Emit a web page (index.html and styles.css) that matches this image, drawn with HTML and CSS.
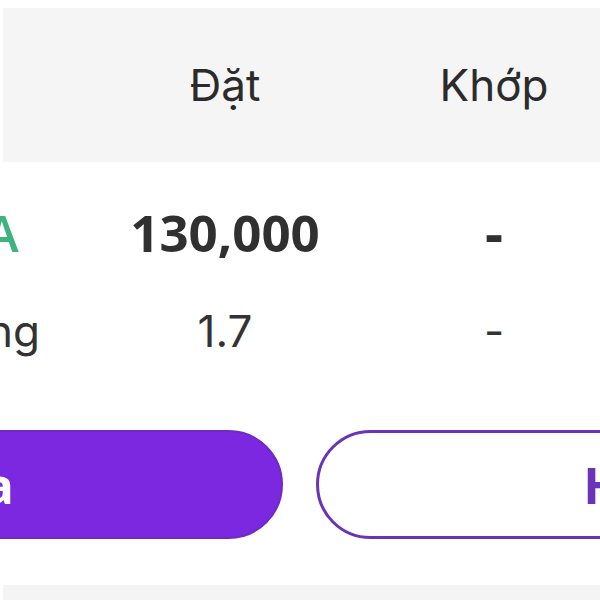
FILE: index.html
```html
<!DOCTYPE html>
<html lang="vi">
<head>
<meta charset="utf-8">
<link rel="stylesheet" href="styles.css">
</head>
<body>
<div class="screen">
  <div class="head">
    <div class="cell c1"></div>
    <div class="cell c2">Đặt</div>
    <div class="cell c3">Khớp</div>
  </div>
  <div class="row row-main">
    <div class="cell c1"><span class="side buy">A</span></div>
    <div class="cell c2 big">130,000</div>
    <div class="cell c3 big">-</div>
  </div>
  <div class="row row-sub">
    <div class="cell c1"><span class="side label">ng</span></div>
    <div class="cell c2">1.7</div>
    <div class="cell c3">-</div>
  </div>
  <div class="actions">
    <button class="btn btn-fill">Sửa</button>
    <button class="btn btn-line">Hủy</button>
  </div>
  <div class="foot"></div>
</div>
</body>
</html>
```
FILE: styles.css
```css
html, body {
  margin: 0;
  padding: 0;
  background: #ffffff;
  overflow: hidden;
}
.screen {
  width: 600px;
  height: 600px;
  overflow: hidden;
  font-family: Inter, "Noto Sans", sans-serif;
  color: #2e2e2e;
  display: flex;
  flex-direction: column;
}
.screen > * {
  flex-shrink: 0;
}
.head, .row {
  display: grid;
  grid-template-columns: 90px 270px 268px;
  align-items: center;
}
.head {
  margin-top: 8px;
  margin-left: 3px;
  height: 154px;
  background: #f5f5f5;
  grid-template-columns: 87px 270px 268px;
  font-size: 44px;
  line-height: 1;
  color: #2b2b2b;
}
.cell {
  text-align: center;
  white-space: nowrap;
}
.c1 {
  text-align: left;
}
.row-main {
  height: 140px;
  font-family: "Open Sans", "Noto Sans", sans-serif;
  font-weight: 700;
  font-size: 51px;
  line-height: 1;
  color: #303030;
}
.row-main .c3 {
  font-size: 56px;
}
.buy {
  display: inline-block;
  margin-left: -15px;
  color: #3db47f;
  font-weight: 600;
}
.row-sub {
  height: 58px;
  font-size: 44px;
  line-height: 1;
  color: #333333;
}
.label {
  display: inline-block;
  margin-left: -13px;
}
.actions {
  margin-top: 70px;
  display: flex;
  gap: 33px;
  margin-left: -351px;
}
.btn {
  flex: none;
  width: 634px;
  height: 109px;
  border-radius: 55px;
  font-family: "Open Sans", "Noto Sans", sans-serif;
  font-weight: 700;
  font-size: 50px;
  line-height: 1;
  padding: 0;
}
.btn-fill {
  background: #7b28e0;
  border: 2px solid #6f2bc4;
  color: #ffffff;
}
.btn-line {
  background: #ffffff;
  border: 3px solid #6a33b8;
  color: #6a33b8;
}
.foot {
  margin-top: 46px;
  margin-left: 3px;
  height: 15px;
  background: #f4f4f4;
}
```
